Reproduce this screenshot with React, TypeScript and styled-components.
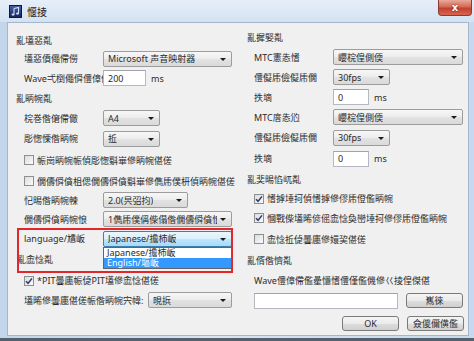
import React from 'react'
import styled, { createGlobalStyle, css } from 'styled-components'

const GlobalStyle = createGlobalStyle`
  html, body {
    margin: 0;
    padding: 0;
    background: #fff;
  }
  body {
    font-family: "Noto Sans", "Noto Sans CJK SC", sans-serif;
    font-size: 9px;
    color: #2b2b2b;
  }
  * { box-sizing: border-box; }
`

const Window = styled.div`
  width: 474px;
  height: 341px;
  display: flex;
  flex-direction: column;
  background: linear-gradient(to right, #c2d5eb, #d7e5f4 45%, #c6d9ee);
  border-bottom: 3px solid #56606b;
  position: relative;
  overflow: hidden;
`

const TitleBar = styled.div`
  height: 22px;
  flex-shrink: 0;
  display: flex;
  align-items: center;
  gap: 5px;
  padding: 0 2px 0 9px;
  background: linear-gradient(to bottom, #e6eef8, #d3e2f2);
  font-size: 10px;
  color: #1b1b1b;
`

const CloseButton = styled.div`
  align-self: flex-start;
  margin-left: auto;
  width: 34px;
  height: 16px;
  border: 1px solid #8a3b30;
  border-top: none;
  border-radius: 0 0 4px 4px;
  background: linear-gradient(to bottom, #e9a999, #d46a57 45%, #c2412f 55%, #d9654f);
  color: #fff;
  font: bold 10px "DejaVu Sans", sans-serif;
  display: flex;
  align-items: center;
  justify-content: center;
  text-shadow: 0 0 2px #5a1a12;
`

const Frame = styled.div`
  flex: 1;
  padding: 0 5px 4px 7px;
  display: flex;
`

const Client = styled.div`
  flex: 1;
  background: #f0f0f0;
  border: 1px solid #a3b6cd;
  display: grid;
  grid-template-columns: 230px 1fr;
`

const Column = styled.div<{ $top: number }>`
  display: flex;
  flex-direction: column;
  padding: ${p => p.$top}px 4px 0 8px;
`

const Row = styled.div<{ $h: number; $indent?: number; $end?: boolean }>`
  height: ${p => p.$h}px;
  flex-shrink: 0;
  display: flex;
  align-items: center;
  gap: ${p => (p.$end ? 8 : 0)}px;
  justify-content: ${p => (p.$end ? 'flex-end' : 'flex-start')};
  padding-left: ${p => p.$indent ?? 8}px;
  white-space: nowrap;
`

const Label = styled.span<{ $w?: number }>`
  width: ${p => p.$w ?? 79}px;
  flex-shrink: 0;
  overflow: hidden;
`

const Unit = styled.span`
  margin-left: 5px;
`

const Combo = styled.div<{ $w: number; $open?: boolean }>`
  position: relative;
  width: ${p => p.$w}px;
  height: 16px;
  flex-shrink: 0;
  border: 1px solid #9c9c9c;
  border-radius: 2px;
  padding: 0 14px 0 4px;
  display: flex;
  align-items: center;
  background: linear-gradient(to bottom, #f7f7f7, #ececec 50%, #e2e2e2 51%, #dadada);
  ${p =>
    p.$open &&
    css`
      border-color: #3c7fb1;
      background: linear-gradient(to bottom, #eaf6fd, #d9f0fc 50%, #bee6fd 51%, #a7d9f5);
    `}
  &::after {
    content: '';
    position: absolute;
    right: 5px;
    top: 6px;
    border-left: 3px solid transparent;
    border-right: 3px solid transparent;
    border-top: 3px solid #1a1a1a;
  }
`

const ComboText = styled.span`
  overflow: hidden;
`

const DropList = styled.div`
  position: absolute;
  left: -1px;
  right: -1px;
  top: 15px;
  background: #fff;
  border: 1px solid #646464;
  display: flex;
  flex-direction: column;
  z-index: 2;
`

const DropItem = styled.div<{ $active?: boolean }>`
  height: 10px;
  line-height: 10px;
  padding-left: 3px;
  color: ${p => (p.$active ? '#fff' : '#2b2b2b')};
  background: ${p => (p.$active ? '#3399ff' : 'transparent')};
`

const Field = styled.div<{ $w: number }>`
  width: ${p => p.$w}px;
  height: 16px;
  flex-shrink: 0;
  background: #fff;
  border: 1px solid #b5b8c0;
  border-top-color: #a0a3aa;
  padding-left: 4px;
  display: flex;
  align-items: center;
`

const Box = styled.span`
  width: 10px;
  height: 10px;
  flex-shrink: 0;
  margin-right: 3px;
  border: 1px solid #8e8f8f;
  background: linear-gradient(135deg, #dcdcdc, #fbfbfb);
  display: flex;
  align-items: center;
  justify-content: center;
`

const Button = styled.div<{ $w?: number }>`
  width: ${p => p.$w ?? 57}px;
  height: 15px;
  flex-shrink: 0;
  border: 1px solid #7a7a7a;
  border-radius: 3px;
  background: linear-gradient(to bottom, #f4f4f4, #ebebeb 50%, #dddddd 51%, #d0d0d0);
  display: flex;
  align-items: center;
  justify-content: center;
`

const Highlight = styled.div`
  position: absolute;
  left: 17px;
  top: 228px;
  width: 216px;
  height: 45px;
  border: 2px solid #e2262b;
  pointer-events: none;
`

const AppIcon = () => (
  <svg width="13" height="13" viewBox="0 0 13 13">
    <defs>
      <linearGradient id="ig" x1="0" y1="0" x2="0" y2="1">
        <stop offset="0" stopColor="#4a5ea8" />
        <stop offset="1" stopColor="#16245a" />
      </linearGradient>
    </defs>
    <rect x="0.5" y="0.5" width="12" height="12" fill="url(#ig)" stroke="#0e1840" />
    <path d="M5 3.5 L9.5 2.5 V8.5" stroke="#cfe0ff" strokeWidth="1.1" fill="none" />
    <path d="M5 3.5 V9.5" stroke="#cfe0ff" strokeWidth="1.1" fill="none" />
    <ellipse cx="4" cy="9.6" rx="1.5" ry="1.1" fill="#cfe0ff" />
    <ellipse cx="8.5" cy="8.6" rx="1.5" ry="1.1" fill="#cfe0ff" />
  </svg>
)

const Check: React.FC<{ on?: boolean }> = ({ on }) => (
  <Box>
    {on && (
      <svg width="8" height="8" viewBox="0 0 8 8">
        <path d="M1 4.2 L3.1 6.3 L7 1.4" stroke="#2d3f72" strokeWidth="1.5" fill="none" />
      </svg>
    )}
  </Box>
)

const App: React.FC = () => {
  return (
    <Window>
      <GlobalStyle />
      <TitleBar>
        <AppIcon />
        <span>愝掕</span>
        <CloseButton>x</CloseButton>
      </TitleBar>
      <Frame>
        <Client>
          <Column $top={8}>
            <Row $h={18} $indent={0}>亂壒惡亃</Row>
            <Row $h={19}>
              <Label>壒惡僨僶僀僗</Label>
              <Combo $w={129}><ComboText>Microsoft 声音映射器</ComboText></Combo>
            </Row>
            <Row $h={20}>
              <Label>Wave弌椡僶僢僼傽僒僀僘</Label>
              <Field $w={43}>200</Field>
              <Unit>ms</Unit>
            </Row>
            <Row $h={20} $indent={0}>亂昞帵亃</Row>
            <Row $h={20}>
              <Label>梡巻偺僒僀僘</Label>
              <Combo $w={57}><ComboText>A4</ComboText></Combo>
            </Row>
            <Row $h={21}>
              <Label>彫愡慄偺昞帵</Label>
              <Combo $w={57}><ComboText>拞</ComboText></Combo>
            </Row>
            <Row $h={22}>
              <Check />
              <span>帪崗昞帵帪偵彫愡斣崋傪昞帵偡傞</span>
            </Row>
            <Row $h={20}>
              <Check />
              <span>僩儔僢僋柤偲僩儔僢僋斣崋傪儁乕僕枅偵昞帵偡傞</span>
            </Row>
            <Row $h={18}>
              <Label>忋晹偺昞帵朄</Label>
              <Combo $w={85}><ComboText>2.0(昗弨抣)</ComboText></Combo>
            </Row>
            <Row $h={20}>
              <Label>僩儔僢僋昞帵悢</Label>
              <Combo $w={129}><ComboText>1儁乕僕偁偨傝偺僩儔僢僋悢傪昞帵</ComboText></Combo>
            </Row>
            <Row $h={19}>
              <Label>language/尵岅</Label>
              <Combo $w={129} $open>
                <ComboText>Japanese/擔杮岅</ComboText>
                <DropList>
                  <DropItem>Japanese/擔杮岅</DropItem>
                  <DropItem $active>English/塸岅</DropItem>
                </DropList>
              </Combo>
            </Row>
            <Row $h={22} $indent={1}>亂嵞惗亃</Row>
            <Row $h={21}>
              <Check on />
              <span>*PIT曇廤帪偼PIT壒傪嵞惗偡傞</span>
            </Row>
            <Row $h={18}>
              <Label $w={124}>壒晞傪曇廤偡傞帪偺昞帵宍幃:</Label>
              <Combo $w={84}><ComboText>晛捠</ComboText></Combo>
            </Row>
          </Column>

          <Column $top={4}>
            <Row $h={20} $indent={1}>亂摨婜亃</Row>
            <Row $h={20}>
              <Label>MTC憲怣愭</Label>
              <Combo $w={130}><ComboText>巊梡偟側偄</ComboText></Combo>
            </Row>
            <Row $h={20}>
              <Label>僼儗乕儉儗乕僩</Label>
              <Combo $w={57}><ComboText>30fps</ComboText></Combo>
            </Row>
            <Row $h={20}>
              <Label>抶墑</Label>
              <Field $w={36}>0</Field>
              <Unit>ms</Unit>
            </Row>
            <Row $h={20}>
              <Label>MTC庴怣尦</Label>
              <Combo $w={130}><ComboText>巊梡偟側偄</ComboText></Combo>
            </Row>
            <Row $h={21}>
              <Label>僼儗乕儉儗乕僩</Label>
              <Combo $w={57}><ComboText>30fps</ComboText></Combo>
            </Row>
            <Row $h={21}>
              <Label>抶墑</Label>
              <Field $w={36}>0</Field>
              <Unit>ms</Unit>
            </Row>
            <Row $h={20} $indent={1}>亂奜晹惂屼亃</Row>
            <Row $h={19}>
              <Check on />
              <span>愭摢埵抲偵愭摢傪僇乕僜儖昞帵</span>
            </Row>
            <Row $h={20}>
              <Check on />
              <span>慖戰偨壒晞偐傜嵞惗奐巒埵抲傪僇乕僜儖昞帵</span>
            </Row>
            <Row $h={22}>
              <Check />
              <span>嵞惗拞偼曇廤傪嬛巭偡傞</span>
            </Row>
            <Row $h={21} $indent={1}>亂偦偺懠亃</Row>
            <Row $h={19}>Wave僼傽僀儖曐懚愭僼僅儖僟傪巜掕偟傑偡</Row>
            <Row $h={21}>
              <Field $w={144} />
              <span style={{ width: 8 }} />
              <Button>嶲徠</Button>
            </Row>
            <Row $h={24} $end>
              <Button>OK</Button>
              <Button>僉儍儞僙儖</Button>
            </Row>
          </Column>
        </Client>
      </Frame>
      <Highlight />
    </Window>
  )
}

export default App
